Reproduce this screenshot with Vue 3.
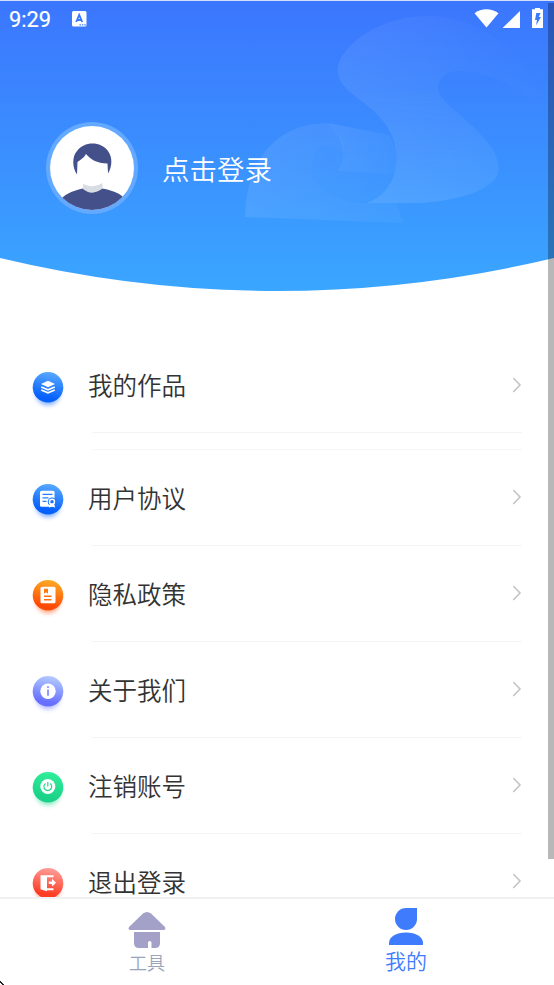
<script setup>
const groups = [
  [{ label: '我的作品', icon: 'layers', top: '#58a9ff', bottom: '#0560fd' }],
  [
    { label: '用户协议', icon: 'document', top: '#58a9ff', bottom: '#0560fd' },
    { label: '隐私政策', icon: 'book', top: '#ffab24', bottom: '#ff4a05' },
    { label: '关于我们', icon: 'info', top: '#b4ccff', bottom: '#666fff' },
    { label: '注销账号', icon: 'power', top: '#30ee9b', bottom: '#19d287' },
    { label: '退出登录', icon: 'exit', top: '#ff9f9b', bottom: '#ff3b22' }
  ]
]
</script>

<template>
  <div class="screen">
    <header class="hero">
      <svg class="hero-bg" width="554" height="292" viewBox="0 0 554 292" aria-hidden="true">
        <defs>
          <linearGradient id="sky" x1="0" y1="0" x2="0" y2="1">
            <stop offset="0" stop-color="#3b76fe" />
            <stop offset="1" stop-color="#3aa6ff" />
          </linearGradient>
          <linearGradient id="ribbon" gradientUnits="userSpaceOnUse" x1="350" y1="140" x2="535" y2="60">
            <stop offset="0" stop-color="#fff" stop-opacity=".08" />
            <stop offset=".5" stop-color="#fff" stop-opacity=".045" />
            <stop offset="1" stop-color="#fff" stop-opacity="0" />
          </linearGradient>
          <linearGradient id="roll" x1="0" y1="0" x2="1" y2="0">
            <stop offset="0" stop-color="#fff" stop-opacity=".09" />
            <stop offset="1" stop-color="#fff" stop-opacity=".035" />
          </linearGradient>
          <linearGradient id="fold" gradientUnits="userSpaceOnUse" x1="0" y1="80" x2="0" y2="203">
            <stop offset="0" stop-color="#fff" stop-opacity="0" />
            <stop offset="1" stop-color="#fff" stop-opacity=".04" />
          </linearGradient>
        </defs>
        <path d="M0 1H554V258Q416 291 277 291T0 258Z" fill="url(#sky)" />
        <path d="M337.7 70C337.7 50 375 16 428 16C480 16 530 55 547 108V114C530 95 495 71 460 71C444 71 438 80 438 89C438 105 498 135 498.7 168C499 194 440 203 415 203H366C385 197 396 180 396.5 160C397 105 337.7 100 337.7 70Z" fill="url(#ribbon)" />
        <path d="M366 203C385 197 396 180 396.5 160C396.700 122 368 108 350 91L438 89C438 105 498 135 498.700 168C499 194 440 203 415 203Z" fill="url(#fold)" />
        <path d="M245 217C247 150 285 123 328 123C338 132 344 142 344.500 152L323 146C316 150 312 160 312 171C312 187 334 202 366 203H397.500C398 212 402 218 404 223Z" fill="url(#roll)" />
        <path d="M328 123L390 135C397 150 398 165 394 174L338 171C347 157 346 141 328 123Z" fill="url(#roll)" />
        <path d="M323 146L344 152C344 160 341 167 338 171L394 174C390 190 375 200 366 202C330 202 312 185 312 171C312 160 317 150 323 146Z" fill="url(#roll)" opacity=".6" />
        <path d="M377 100L440 102M396 107L442 110M402 115L450 118M416 150L465 152M418 160L470 162" stroke="#fff" stroke-opacity=".025" />
      </svg>

      <div class="status">
        <span class="clock">9:29</span>
        <svg class="input-mark" width="15" height="16" viewBox="0 0 15 16">
          <rect width="14.500" height="15.500" rx="1.500" fill="#fff" />
          <path d="M4.200 11L7.200 4L10.200 11M5.200 9H9.200" fill="none" stroke="#3c79fc" stroke-width="1.900" />
          <path d="M7.500 13.900H14" stroke="#3c79fc" stroke-width="1.200" stroke-dasharray="1.400 1" />
        </svg>
        <svg class="signals" width="70" height="20" viewBox="0 0 70 20" fill="#fff">
          <path d="M.500 5.200C7 -.200 17.500 -.200 24.500 5.200L12.500 19.500Z" />
          <path d="M46 3V20H28.500Z" />
          <path d="M58 1.200H61V0H66V1.200H69V20H58Z" />
          <path d="M62.300 5H66.500L64.800 9H67L62 17.500L63 12H61Z" fill="#3c79fc" />
        </svg>
      </div>

      <div class="profile">
        <svg width="92" height="92" viewBox="0 0 92 92">
          <defs><clipPath id="face"><circle cx="46" cy="46" r="42" /></clipPath></defs>
          <circle cx="46" cy="46" r="46" fill="#62a9ff" />
          <circle cx="46" cy="46" r="42" fill="#fff" />
          <g clip-path="url(#face)">
            <path d="M14 78C21 70 31 68 37 66.500Q46 73 56 66.500C64 68 73 70 79 77V90H14Z" fill="#445089" />
            <path d="M37 62Q48 67 56.500 61V66.500Q46 74.500 37 67Z" fill="#d8dce3" />
            <path d="M31 52.500C26 46 26 34 31 29C38 19 55 19 62 29C67 36 66 45 62 51.500L61.500 41.500C51 41.500 44 37 40 32C38 36 34 38 31.500 40Z" fill="#445089" />
          </g>
        </svg>
        <span class="login">点击登录</span>
      </div>
    </header>

    <main class="menu">
      <section v-for="(group, gi) in groups" :key="gi" class="group">
        <div v-for="item in group" :key="item.icon" class="row">
          <svg class="badge" width="43" height="45" viewBox="-.5 .2 43 45">
            <defs>
              <linearGradient :id="'g-' + item.icon" x1=".6" y1="0" x2=".4" y2="1">
                <stop offset="0" :stop-color="item.top" />
                <stop offset=".85" :stop-color="item.bottom" />
              </linearGradient>
              <filter :id="'f-' + item.icon" x="-30%" y="-30%" width="160%" height="160%">
                <feGaussianBlur stdDeviation="2.300" />
              </filter>
            </defs>
            <circle cx="21.500" cy="27" r="12.500" :fill="item.bottom" opacity=".45" :filter="`url(#f-${item.icon})`" />
            <circle cx="21.500" cy="21.500" r="15.300" :fill="`url(#g-${item.icon})`" />

            <g v-if="item.icon === 'layers'" fill="#fff">
              <path d="M21.500 15L28.500 18.200L21.500 21.400L14.500 18.200Z" />
              <path d="M14.700 21.200L21.500 24L28.300 21.200M14.700 24.200L21.500 27L28.300 24.200" fill="none" stroke="#fff" stroke-width="1.700" />
            </g>
            <g v-else-if="item.icon === 'document'">
              <rect x="13.500" y="13" width="14.500" height="16" rx="1.500" fill="#fff" />
              <path d="M16 16.500H26M16 20H22M16 23.500H20" stroke="#2480ff" stroke-width="1.200" />
              <circle cx="25.500" cy="24" r="4.300" fill="#1870ff" />
              <circle cx="25.500" cy="24" r="2.500" fill="none" stroke="#fff" stroke-width="1.500" />
              <path d="M23.400 26L22.500 30L25.500 28.500L28.700 30L27.500 26Z" fill="#fff" />
            </g>
            <g v-else-if="item.icon === 'book'">
              <rect x="14" y="13" width="15" height="16.500" rx="1.500" fill="#fff" />
              <path d="M17.500 15H21.500V20L19.500 18.500L17.500 20Z" fill="#ff7b12" />
              <path d="M17.500 22.500H25M17.500 26H25" stroke="#ff6e10" stroke-width="1.400" />
            </g>
            <g v-else-if="item.icon === 'info'">
              <circle cx="21.500" cy="21.500" r="7.700" fill="#fff" />
              <path d="M21.500 16.500V18.300M21.500 19.700V26" fill="none" stroke="#8997ff" stroke-width="1.900" />
            </g>
            <g v-else-if="item.icon === 'power'">
              <circle cx="21.300" cy="20.700" r="7.500" fill="#fff" />
              <path d="M19 17.700A3.900 3.900 0 1 0 23.600 17.700M21.300 16.300V20.800" fill="none" stroke="#20d98a" stroke-width="1.200" />
            </g>
            <g v-else>
              <path d="M14 13.500H27V15.500H20.500V26.500H27V28.500H20.500V29.500L14 27.500Z" fill="#fff" />
              <path d="M22.300 19.700H25.500V17L29.500 20.900L25.500 24.800V22.100H22.300Z" fill="#fff" />
            </g>
          </svg>
          <div class="line">
            <span class="label">{{ item.label }}</span>
            <svg class="chevron" width="10" height="16" viewBox="0 0 10 16">
              <path d="M1.300 1L8 8L1.300 15" fill="none" stroke="#c6c6c6" stroke-width="1.700" />
            </svg>
          </div>
        </div>
      </section>
    </main>

    <nav class="tabs">
      <a class="tab tools">
        <svg width="38" height="37" viewBox="0 0 38 37" fill="#a3a1c7">
          <path d="M15 1.500Q19 -1.500 23 1.500L36.500 14.500Q39 18 35 18H3Q-1 18 1.500 14.500Z" />
          <path d="M6 20H32V31Q32 36 27 36H23.500V30.500Q23.500 29 21.700 29T20 30.500V36H11Q6 36 6 31Z" />
        </svg>
        <span>工具</span>
      </a>
      <a class="tab mine">
        <svg width="34" height="38" viewBox="0 0 34 38" fill="#3e7bfd">
          <path d="M17 0H28V11A11 11 0 1 1 17 0Z" />
          <path d="M0 37V35C0 29 7 24.500 17 24.500S34 29 34 35V37Z" />
        </svg>
        <span>我的</span>
      </a>
    </nav>

    <div class="scrollbar"></div>
    <svg class="corner" width="4" height="4" viewBox="0 0 4 4"><path d="M0 0H1V1H2V2H3V3H4V4H2V3H1V2H0Z" fill="#222" /></svg>
  </div>
</template>

<style>
body {
  margin: 0;
  background: #fff;
}
</style>

<style scoped>
.screen {
  position: relative;
  display: flex;
  flex-direction: column;
  width: 554px;
  height: 985px;
  overflow: hidden;
  background: #fff;
  font-family: "Noto Sans CJK SC", sans-serif;
  font-weight: 350;
}
.hero {
  position: relative;
  flex: none;
  height: 337px;
  box-sizing: border-box;
  border-top: 1px solid #d3e0f8;
}
.hero-bg {
  position: absolute;
  left: 0;
  top: -1px;
  z-index: -1;
  display: block;
}
.hero,
.screen {
  isolation: isolate;
}
.status {
  display: flex;
  align-items: center;
  height: 36px;
  padding: 0 10px 0 9px;
  color: #fff;
}
.clock {
  width: 63px;
  padding-top: 2px;
  font: 400 21.8px/36px Roboto, sans-serif;
  -webkit-text-stroke: 0.2px #fff;
}
.signals {
  margin-left: auto;
  margin-top: -2px;
}
.profile {
  display: flex;
  align-items: center;
  gap: 24px;
  height: 92px;
  padding: 85px 0 0 46px;
}
.login {
  color: #fff;
  font-size: 27.5px;
  line-height: 40px;
}
.menu {
  flex: 1;
  min-height: 0;
  overflow: hidden;
}
.group + .group {
  margin-top: 17px;
}
.group + .group::before {
  content: "";
  display: block;
  height: 1px;
  margin: -1px 32px 0 92px;
  background: #f6f6f6;
}
.group + .group .badge,
.group + .group .chevron {
  transform: translateY(-1px);
}
.row {
  display: flex;
  align-items: center;
  height: 96px;
  padding: 0 32px 0 26px;
}
.badge {
  flex: none;
  margin-top: 6px;
}
.line {
  display: flex;
  flex: 1;
  align-items: center;
  justify-content: space-between;
  height: 95px;
  margin-left: 23px;
  border-bottom: 1px solid #f4f4f4;
}
.label {
  margin-left: -4px;
  color: #333;
  font-size: 24.5px;
  line-height: 36px;
}
.tabs {
  flex: none;
  display: flex;
  height: 86px;
  border-top: 2px solid #f0f0f0;
  background: #fff;
}
.tab {
  display: flex;
  flex-direction: column;
  align-items: center;
}
.tools {
  width: 294px;
  padding-top: 13px;
  color: #9aa5bd;
  font-size: 18px;
  line-height: 26px;
}
.mine {
  width: 224px;
  padding-top: 9px;
  color: #3e7bfd;
  font-size: 21px;
  line-height: 28px;
}
.scrollbar {
  position: absolute;
  top: 3px;
  right: 0;
  width: 6px;
  height: 856px;
  background: rgba(0, 0, 0, 0.28);
}
.corner {
  position: absolute;
  left: 0;
  bottom: 0;
}
</style>
